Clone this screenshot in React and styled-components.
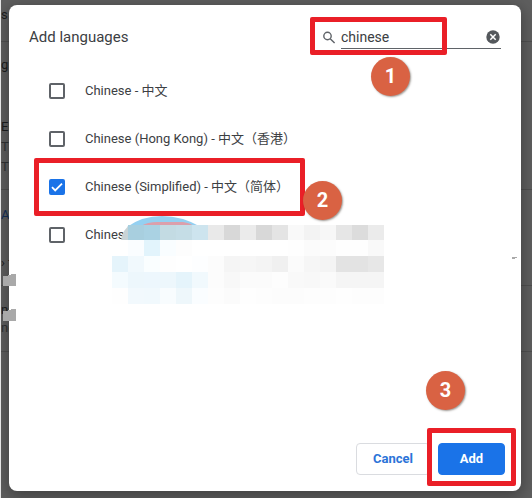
import React, { useState } from 'react';
import styled, { createGlobalStyle } from 'styled-components';

const GlobalStyle = createGlobalStyle`
  * {
    box-sizing: border-box;
  }

  body {
    margin: 0;
    background: #5f5f5f;
    font-family: Roboto, 'Noto Sans CJK SC', sans-serif;
    font-size: 13px;
    color: #3c4043;
  }
`;

const Screen = styled.div`
  position: relative;
  display: flex;
  min-height: 100vh;
  padding: 5px 11px 7px 8px;
  overflow: hidden;
  border-left: 1px solid #e4e4e4;
`;

const Backdrop = styled.div`
  position: absolute;
  inset: 0;
  overflow: hidden;
  padding-top: 5px;
  white-space: nowrap;
  color: #1c1d1e;
`;

const BackdropLine = styled.div`
  height: ${props => props.$height}px;
  line-height: 20px;
  color: ${props => (props.$link ? '#15305a' : props.$muted ? '#303234' : 'inherit')};
  border-bottom: ${props => (props.$ruled ? '1px solid #505050' : '0')};
`;

const Dialog = styled.section`
  position: relative;
  display: flex;
  flex: 1;
  flex-direction: column;
  background: #fff;
  border-radius: 8px;
  box-shadow: 0 4px 16px 2px rgba(0, 0, 0, 0.3);
`;

const Header = styled.header`
  display: flex;
  align-items: center;
  justify-content: space-between;
  padding: 20px 20px 18px;
`;

const Title = styled.h1`
  margin: 0;
  font-size: 15px;
  font-weight: 400;
  line-height: 24px;
`;

const Search = styled.div`
  position: relative;
  display: flex;
  align-items: center;
  gap: 5px;
`;

const Field = styled.div`
  display: flex;
  align-items: center;
  width: 160px;
  height: 24px;
  padding-right: 1px;
  border-bottom: 1px solid #5f6368;
`;

const SearchInput = styled.input`
  flex: 1;
  min-width: 0;
  padding: 0;
  border: 0;
  outline: 0;
  background: none;
  font: inherit;
  font-size: 14px;
  color: #3c4043;
`;

const ClearButton = styled.button`
  display: flex;
  padding: 0;
  border: 0;
  background: none;
  cursor: pointer;
`;

const List = styled.ul`
  flex: 1;
  margin: 0;
  padding: 0 216px 0 30px;
  list-style: none;
`;

const Row = styled.li`
  position: relative;
  height: 48px;
`;

const Option = styled.label`
  display: flex;
  align-items: center;
  gap: 20px;
  height: 100%;
  padding-left: 10px;
  line-height: 16px;
  white-space: nowrap;
`;

const OptionText = styled.span`
  height: 16px;
`;

const Checkbox = styled.input`
  appearance: none;
  flex: none;
  width: 16px;
  height: 16px;
  margin: 0;
  border: 2px solid #5f6368;
  border-radius: 2px;

  &:checked {
    border-color: #1a73e8;
    background: #1a73e8 url("data:image/svg+xml,%3Csvg xmlns='http://www.w3.org/2000/svg' viewBox='0 0 12 12'%3E%3Cpath d='M1 6.2l3.2 3.2L11 2.6' fill='none' stroke='white' stroke-width='1.8'/%3E%3C/svg%3E") center / 12px no-repeat;
  }
`;

const Footer = styled.footer`
  display: flex;
  justify-content: flex-end;
  gap: 8px;
  padding: 16px;
`;

const Action = styled.div`
  position: relative;
`;

const Button = styled.button`
  height: 32px;
  width: ${props => (props.$primary ? 67 : 74)}px;
  padding: 0;
  border: 1px solid ${props => (props.$primary ? '#1a73e8' : '#dadce0')};
  border-radius: 4px;
  background: ${props => (props.$primary ? '#1a73e8' : '#fff')};
  color: ${props => (props.$primary ? '#fff' : '#2b74d8')};
  font: inherit;
  font-weight: 700;
  line-height: 16px;
  cursor: pointer;
`;

const Highlight = styled.div`
  position: absolute;
  inset: ${props => props.$inset};
  z-index: 2;
  border: 5px solid #ea1f27;
  border-radius: 2px;
  pointer-events: none;
`;

const Step = styled.span`
  position: absolute;
  top: ${props => props.$top}px;
  right: ${props => props.$right}px;
  z-index: 3;
  width: 39px;
  height: 39px;
  border-radius: 50%;
  background: #d96243;
  box-shadow: 1px 1px 2px rgba(60, 50, 40, 0.5);
  color: #fff;
  font-size: 20px;
  font-weight: 700;
  line-height: 39px;
  text-align: center;
`;

const MosaicSvg = styled.svg`
  position: absolute;
  top: 4px;
  left: 73px;
  z-index: 1;
`;

const Fragment = styled.svg`
  position: absolute;
  top: ${props => props.$top}px;
  left: ${props => props.$left};
  right: ${props => props.$right};
`;

const CELL = 16;

const mosaic = [
  ['', '#a8cfdf', '#aad2e3', '#c3dbe3', '#c5dde6', '#cde4ee', '#e9e9e9', '#d8d8d8', '#ebebeb', '#d8d8d8', '#e4e4e4', '#f9f9f9', '#f3f3f3', '#f7f7f7', '#e6e6e6', '#dcdcdc', '#ebebeb'],
  ['', '#fafdff', '#e2f4fc', '#f9fdff', '#fdfdfd', '', '', '', '', '', '', '#fefefe', '#fbfbfb', '#fcfcfc', '#fefefe', '#fefefe', '#f9f9f9'],
  ['#e5f4fb', '#f1f9fd', '#fafeff', '#fefefe', '', '#fdfeff', '#fcfcfc', '#f5f5f5', '#f6f6f6', '#f4f4f4', '#f0f0f0', '#fbfbfb', '#f6f6f6', '#f4f4f4', '#e3e3e3', '#e3e3e3', '#e7e7e7'],
  ['#f4fbfe', '#edf7fc', '#edf7fd', '#edf7fc', '#e5f4fb', '#f1f9fd', '#fcfcfc', '#f8f8f8', '#fbfbfb', '#fbfbfb', '#fdfdfd', '#f9f9f9', '#f8f8f8', '#fafafa', '#f5f5f5', '#f5f5f5', '#f5f5f5'],
  ['#fefefe', '#f2f9fd', '#f1f9fd', '#f8fcfe', '#eef7fb', '#fafdff', '#fdfdfd', '#fbfbfb', '#fefefe', '#fdfdfd', '#fcfcfc', '#fcfcfc', '#fdfdfd', '#fdfdfd', '#fefefe', '#fdfdfd', '#fdfdfd'],
];

const backdropLines = [
  { text: 's', height: 37, ruled: true },
  { text: '', height: 13 },
  { text: 'g', height: 62 },
  { text: 'En', height: 20 },
  { text: 'Th', height: 20, muted: true },
  { text: 'Th', height: 33, muted: true, ruled: true },
  { text: '', height: 15 },
  { text: 'Ad', height: 48, link: true },
  { text: '› t', height: 33, ruled: true },
  { text: '', height: 14 },
  { text: 'ns', height: 18 },
  { text: 'ne', height: 34, muted: true, ruled: true },
];

const languages = [
  { id: 'zh', label: 'Chinese - 中文' },
  { id: 'zh-HK', label: 'Chinese (Hong Kong) - 中文（香港）' },
  { id: 'zh-CN', label: 'Chinese (Simplified) - 中文（简体）', step: 2 },
  { id: 'zh-TW', label: 'Chinese', hidden: true },
];

const SearchIcon = () => (
  <svg width="13" height="13" viewBox="0 0 13 13" fill="none" stroke="#5f6368" strokeWidth="1.4">
    <circle cx="4.5" cy="5" r="3.7" />
    <path d="M7.2 7.7L11.6 12.1" />
  </svg>
);

const ClearIcon = () => (
  <svg width="14" height="14" viewBox="0 0 14 14">
    <circle cx="7" cy="7" r="6.7" fill="#54585c" />
    <path d="M4.3 4.3l5.4 5.4M9.7 4.3L4.3 9.7" stroke="#fff" strokeWidth="1.5" />
  </svg>
);

const Mosaic = () => (
  <MosaicSvg width="272" height="90" viewBox="0 0 272 90" aria-hidden="true">
    <path d="M15 12Q30 1 50 1T89 12Z" fill="#94d0f1" />
    <path d="M29 11Q35 7 46 7H71Q78 8 82 11Z" fill="#dc9fab" />
    <path d="M9 25Q11 14 18 10V25Z" fill="#c9d3d6" />
    {mosaic.map((colors, row) =>
      colors.map((color, col) => (
        <rect
          key={`${row}-${col}`}
          x={col * CELL}
          y={row === 0 ? 10 : 9 + row * CELL}
          width={CELL}
          height={row === 0 ? 15 : CELL}
          fill={color || (row === 0 ? 'none' : '#fff')}
          shapeRendering="crispEdges"
        />
      ))
    )}
  </MosaicSvg>
);

const LanguageRow = ({ language, checked, onToggle }) => (
  <Row>
    <Option>
      <Checkbox type="checkbox" checked={checked} onChange={onToggle} />
      <OptionText>{language.label}</OptionText>
    </Option>
    {language.hidden && <Mosaic />}
    {language.step && (
      <>
        <Highlight $inset="-5px 0 -5px -5px" />
        <Step $top={18} $right={-37}>{language.step}</Step>
      </>
    )}
  </Row>
);

const App = () => {
  const [query, setQuery] = useState('chinese');
  const [selected, setSelected] = useState(['zh-CN']);

  const toggle = id => {
    setSelected(selected.includes(id) ? selected.filter(item => item !== id) : [...selected, id]);
  };

  return (
    <>
      <GlobalStyle />
      <Screen>
        <Backdrop aria-hidden="true">
          {backdropLines.map((line, i) => (
            <BackdropLine
              key={i}
              $height={line.height}
              $link={line.link}
              $muted={line.muted}
              $ruled={line.ruled}
            >
              {line.text}
            </BackdropLine>
          ))}
        </Backdrop>
        <Dialog role="dialog" aria-labelledby="dialog-title">
          <Header>
            <Title id="dialog-title">Add languages</Title>
            <Search>
              <SearchIcon />
              <Field>
                <SearchInput
                  aria-label="Search languages"
                  value={query}
                  onChange={e => setQuery(e.target.value)}
                />
                <ClearButton aria-label="Clear search" onClick={() => setQuery('')}>
                  <ClearIcon />
                </ClearButton>
              </Field>
              <Highlight $inset="-8px 54px -6px -13px" />
              <Step $top={32} $right={91}>1</Step>
            </Search>
          </Header>
          <List>
            {languages.map(language => (
              <LanguageRow
                key={language.id}
                language={language}
                checked={selected.includes(language.id)}
                onToggle={() => toggle(language.id)}
              />
            ))}
          </List>
          <Footer>
            <Button>Cancel</Button>
            <Action>
              <Button $primary>Add</Button>
              <Highlight $inset="-15px -11px -11px -11px" />
              <Step $top={-72} $right={40}>3</Step>
            </Action>
          </Footer>
          <Fragment $top={269} $left="-6px" width="13" height="48" fill="#a9a9a9">
            <path d="M0 2H5V1H8V0H13V12H0ZM0 37H5V36H8V35H13V47H0Z" />
          </Fragment>
          <Fragment $top={252} $right="4px" width="5" height="2" fill="#aaa">
            <path d="M0 0H5V1H3V2H0Z" />
          </Fragment>
        </Dialog>
      </Screen>
    </>
  );
};

export default App;
